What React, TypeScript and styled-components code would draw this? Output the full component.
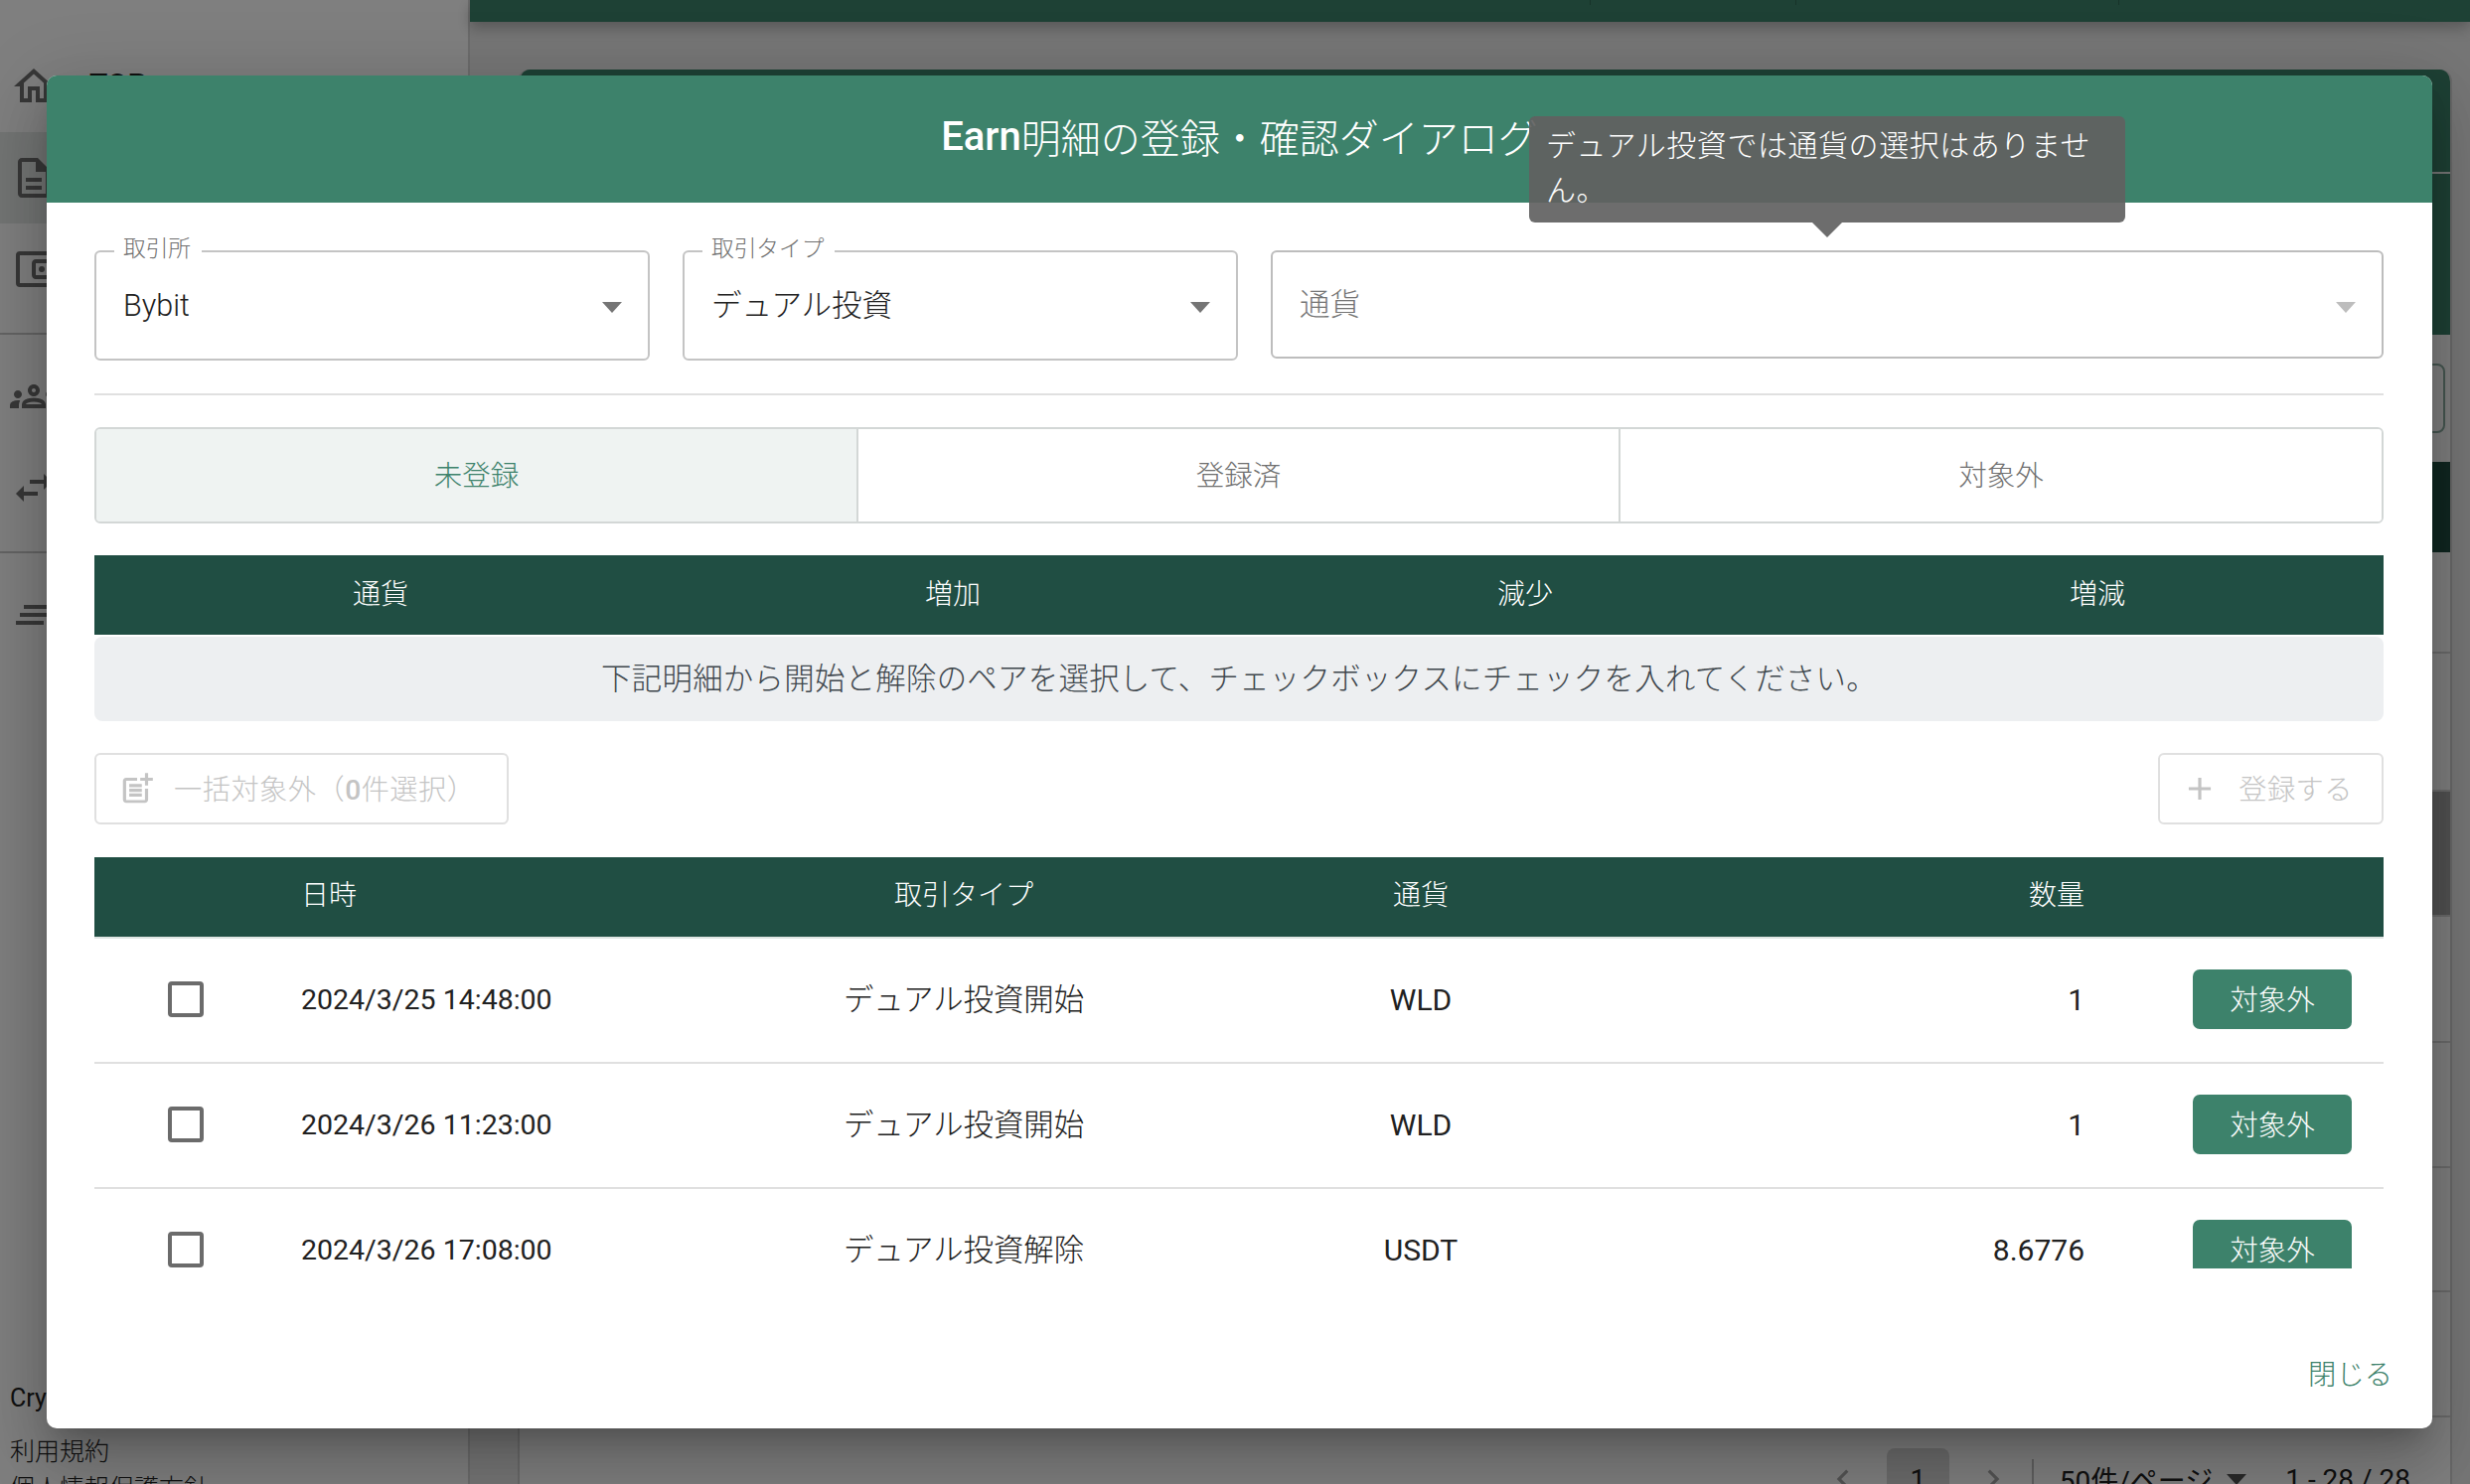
import React from "react"
import styled, { createGlobalStyle } from "styled-components"
import {
  MdAdd,
  MdChevronLeft,
  MdChevronRight,
  MdClearAll,
  MdOutlineAccountBalanceWallet,
  MdOutlineDescription,
  MdOutlineGroups,
  MdOutlineHome,
  MdOutlinePostAdd,
  MdSwapHoriz,
} from "react-icons/md"

const green = "#3d826b"
const darkGreen = "#204e43"

const GlobalStyle = createGlobalStyle`
  html, body {
    margin: 0;
    padding: 0;
    overflow: hidden;
    background: #ececec;
  }
  * {
    box-sizing: border-box;
  }
  body {
    font-family: Roboto, "Noto Sans CJK JP", sans-serif;
    color: #212121;
  }
`

const rows = [
  { date: "2024/3/25 14:48:00", type: "デュアル投資開始", currency: "WLD", amount: "1" },
  { date: "2024/3/26 11:23:00", type: "デュアル投資開始", currency: "WLD", amount: "1" },
  { date: "2024/3/26 17:08:00", type: "デュアル投資解除", currency: "USDT", amount: "8.6776" },
]

const App = () => {
  return (
    <Page>
      <GlobalStyle />
      <Sidebar>
        <SideItem>
          <MdOutlineHome size={48} />
          <SideLabel>TOP</SideLabel>
        </SideItem>
        <SideItem $active>
          <MdOutlineDescription size={48} />
        </SideItem>
        <SideItem>
          <MdOutlineAccountBalanceWallet size={48} />
        </SideItem>
        <SideDivider />
        <SideItem>
          <MdOutlineGroups size={48} />
        </SideItem>
        <SideItem>
          <MdSwapHoriz size={48} />
        </SideItem>
        <SideDivider />
        <SideItem>
          <MdClearAll size={48} />
        </SideItem>
        <SideFooter>
          <Brand>Cry</Brand>
          <LegalLink>利用規約</LegalLink>
          <LegalLink>個人情報保護方針</LegalLink>
        </SideFooter>
      </Sidebar>

      <Main>
        <TopBar>
          <TopMark $width={1128} />
          <TopMark $width={207} />
          <TopMark $width={325} />
        </TopBar>
        <Card>
          <CardHeadTop />
          <CardHeadBottom />
          <CardSearch>
            <SearchBox />
          </CardSearch>
          <CardTableHead />
          <CardRow $height={102} />
          <CardRow $height={139} />
          <CardRow $height={126} $selected />
          <CardRow $height={127} />
          <CardRow $height={126} />
          <CardRow $height={125} />
          <CardRow $height={126} />
          <CardPager>
            <PagerArrow>
              <MdChevronLeft size={38} />
            </PagerArrow>
            <PagerCurrent>1</PagerCurrent>
            <PagerArrow>
              <MdChevronRight size={38} />
            </PagerArrow>
            <PagerSize>
              50件/ページ
              <PagerCaret />
            </PagerSize>
            <span>1 - 28 / 28</span>
          </CardPager>
        </Card>
      </Main>

      <Backdrop />

      <Dialog>
        <DialogTitle>
          <TitleLatin>Earn</TitleLatin>明細の登録・確認ダイアログ
        </DialogTitle>

        <Tooltip>デュアル投資では通貨の選択はありません。</Tooltip>

        <DialogBody>
          <Filters>
            <SelectBox>
              <SelectLabel>取引所</SelectLabel>
              Bybit
              <Caret />
            </SelectBox>
            <SelectBox>
              <SelectLabel>取引タイプ</SelectLabel>
              <CjkValue>デュアル投資</CjkValue>
              <Caret />
            </SelectBox>
            <SelectBox $disabled>
              <CjkValue>通貨</CjkValue>
              <Caret $disabled />
            </SelectBox>
          </Filters>

          <Divider />

          <Tabs>
            <Tab $active>未登録</Tab>
            <Tab>登録済</Tab>
            <Tab>対象外</Tab>
          </Tabs>

          <SummaryHead>
            <span>通貨</span>
            <span>増加</span>
            <span>減少</span>
            <span>増減</span>
          </SummaryHead>
          <Notice>下記明細から開始と解除のペアを選択して、チェックボックスにチェックを入れてください。</Notice>

          <Actions>
            <GhostButton $paddingLeft={22} $paddingRight={32} $gap={18}>
              <MdOutlinePostAdd size={38} />
              <GhostText>
                一括対象外（<b>0</b>件選択）
              </GhostText>
            </GhostButton>
            <GhostButton $paddingLeft={21} $paddingRight={29} $gap={20}>
              <MdAdd size={38} />
              <GhostText>登録する</GhostText>
            </GhostButton>
          </Actions>

          <TableClip>
            <DetailRow $head>
              <span />
              <span>日時</span>
              <Centered>取引タイプ</Centered>
              <Centered>通貨</Centered>
              <RightAligned>数量</RightAligned>
              <span />
            </DetailRow>
            {rows.map(row => (
              <DetailRow key={row.date + row.amount}>
                <CheckCell>
                  <CheckBox />
                </CheckCell>
                <DateCell>{row.date}</DateCell>
                <CjkCell>{row.type}</CjkCell>
                <Centered>{row.currency}</Centered>
                <RightAligned>{row.amount}</RightAligned>
                <ActionCell>
                  <ExcludeButton>対象外</ExcludeButton>
                </ActionCell>
              </DetailRow>
            ))}
          </TableClip>
        </DialogBody>

        <DialogFooter>
          <CloseButton>閉じる</CloseButton>
        </DialogFooter>
      </Dialog>
    </Page>
  )
}

export default App

const Page = styled.div`
  display: flex;
  width: 2486px;
  height: 1494px;
  overflow: hidden;
  position: relative;
`

const Sidebar = styled.aside`
  width: 473px;
  height: 1494px;
  flex: none;
  display: flex;
  flex-direction: column;
  padding-top: 41px;
  background: #fff;
  border-right: 2px solid #d8d8d8;
`

const SideItem = styled.div<{ $active?: boolean }>`
  height: 92px;
  flex: none;
  display: flex;
  align-items: center;
  gap: 32px;
  padding-left: 10px;
  color: #707070;
  background: ${props => (props.$active ? "#e6ebe8" : "transparent")};
`

const SideLabel = styled.span`
  margin-bottom: 6px;
  font-size: 30px;
  font-weight: 500;
  color: #212121;
`

const SideDivider = styled.div`
  height: 2px;
  margin: 18px 0 16px;
  background: #c8c8c8;
`

const SideFooter = styled.div`
  margin-top: auto;
  height: 111px;
  flex: none;
  overflow: hidden;
  padding-left: 10px;
`

const Brand = styled.div`
  font-size: 25px;
  line-height: 50px;
  margin-bottom: 10px;
`

const LegalLink = styled.div`
  font-size: 25px;
  font-weight: 300;
  line-height: 37px;
`

const Main = styled.main`
  flex: 1;
  min-width: 0;
  display: flex;
  flex-direction: column;
`

const TopBar = styled.div`
  height: 22px;
  flex: none;
  display: flex;
  background: ${green};
  box-shadow: 0 6px 14px rgba(0, 0, 0, 0.25);
`

const TopMark = styled.div<{ $width: number }>`
  width: ${props => props.$width}px;
  height: 5px;
  border-right: 1px solid #2f6553;
`

const Card = styled.section`
  margin: 48px 18px 0 48px;
  height: 1500px;
  flex: none;
  border: 2px solid #d2d2d2;
  border-top: none;
  border-radius: 12px 12px 0 0;
  background: #fff;
  overflow: hidden;
`

const CardHeadTop = styled.div`
  height: 105px;
  background: ${green};
  border-bottom: 2px solid #eee;
`

const CardHeadBottom = styled.div`
  height: 162px;
  background: ${green};
`

const CardSearch = styled.div`
  height: 128px;
  display: flex;
  justify-content: flex-end;
  align-items: center;
  padding: 0 5px 0 0;
`

const SearchBox = styled.div`
  width: 300px;
  height: 70px;
  border: 2px solid #8fb0a5;
  border-radius: 8px;
`

const CardTableHead = styled.div`
  height: 91px;
  background: ${darkGreen};
`

const CardRow = styled.div<{ $height: number; $selected?: boolean }>`
  height: ${props => props.$height}px;
  background: ${props => (props.$selected ? "#a5a5a5" : "#fff")};
  border-bottom: 2px solid #d6d6d6;
`

const CardPager = styled.div`
  display: flex;
  align-items: center;
  height: 93px;
  padding: 31px 40px 0 0;
  justify-content: flex-end;
  font-size: 28px;
`

const PagerArrow = styled.span`
  display: flex;
  color: #a8a8a8;
  margin: 0 25px;
`

const PagerCurrent = styled.span`
  width: 63px;
  height: 62px;
  display: flex;
  justify-content: center;
  align-items: center;
  border-radius: 8px;
  background: #d9d9d9;
`

const PagerSize = styled.span`
  display: flex;
  align-items: center;
  gap: 14px;
  height: 40px;
  margin: 0 39px 0 -5px;
  padding-left: 26px;
  border-left: 2px solid #c0c0c0;
`

const PagerCaret = styled.i`
  border-left: 10px solid transparent;
  border-right: 10px solid transparent;
  border-top: 11px solid #555;
`

const Backdrop = styled.div`
  position: absolute;
  inset: 0;
  background: rgba(0, 0, 0, 0.5);
`

const Dialog = styled.div`
  position: absolute;
  left: 47px;
  top: 76px;
  width: 2401px;
  height: 1362px;
  display: flex;
  flex-direction: column;
  background: #fff;
  border-radius: 10px;
  box-shadow: 0 17px 24px -11px rgba(0, 0, 0, 0.2), 0 38px 60px 5px rgba(0, 0, 0, 0.14),
    0 14px 73px 13px rgba(0, 0, 0, 0.12);
`

const DialogTitle = styled.h2`
  margin: 0;
  height: 128px;
  flex: none;
  display: flex;
  align-items: center;
  justify-content: center;
  padding-bottom: 6px;
  background: ${green};
  border-radius: 10px 10px 0 0;
  color: #fff;
  font-size: 40px;
  font-weight: 300;
`

const TitleLatin = styled.span`
  font-weight: 500;
`

const Tooltip = styled.div`
  position: absolute;
  left: 1492px;
  top: 41px;
  width: 600px;
  height: 107px;
  padding: 7px 17px;
  border-radius: 6px;
  background: rgba(97, 97, 97, 0.92);
  color: #fff;
  font-size: 30px;
  font-weight: 300;
  line-height: 45px;
  letter-spacing: 0.55px;

  &::after {
    content: "";
    position: absolute;
    left: 285px;
    top: 107px;
    border-left: 15px solid transparent;
    border-right: 15px solid transparent;
    border-top: 15px solid rgba(97, 97, 97, 0.92);
  }
`

const DialogBody = styled.div`
  flex: 1;
  min-height: 0;
  padding: 48px 49px 0 48px;
`

const Filters = styled.div`
  display: grid;
  grid-template-columns: 559px 559px 1120px;
  column-gap: 33px;
`

const SelectBox = styled.div<{ $disabled?: boolean }>`
  position: relative;
  height: ${props => (props.$disabled ? 109 : 111)}px;
  display: flex;
  align-items: center;
  padding-left: 27px;
  border: 2px solid ${props => (props.$disabled ? "#bdbdbd" : "#c4c4c4")};
  border-radius: 6px;
  font-size: 30.5px;
  font-weight: 300;
  color: ${props => (props.$disabled ? "#757575" : "#212121")};
`

const CjkValue = styled.span`
  padding-bottom: 6px;
`

const SelectLabel = styled.label`
  position: absolute;
  left: 18px;
  top: -17px;
  padding: 0 11px 0 9px;
  background: linear-gradient(transparent 12px, #fff 12px);
  color: #6f6f6f;
  font-size: 22.7px;
  font-weight: 300;
  line-height: 28px;
`

const Caret = styled.i<{ $disabled?: boolean }>`
  position: absolute;
  right: 26px;
  top: 50px;
  border-left: 10.5px solid transparent;
  border-right: 10.5px solid transparent;
  border-top: 11px solid ${props => (props.$disabled ? "#bdbdbd" : "#757575")};
`

const Divider = styled.hr`
  height: 2px;
  margin: 33px 0 32px;
  border: none;
  background: #e0e0e0;
`

const Tabs = styled.div`
  display: grid;
  grid-template-columns: 765px 767px 1fr;
  height: 97px;
  border: 2px solid #d3d7d6;
  border-radius: 6px;
  overflow: hidden;
`

const Tab = styled.div<{ $active?: boolean }>`
  display: flex;
  align-items: center;
  justify-content: center;
  padding-bottom: 5px;
  font-size: 28.5px;
  font-weight: 300;
  color: ${props => (props.$active ? green : "#6f6f6f")};
  background: ${props => (props.$active ? "#eff3f2" : "#fff")};
  border-left: ${props => (props.$active ? "none" : "2px solid #d3d7d6")};
`

const SummaryHead = styled.div`
  display: grid;
  grid-template-columns: repeat(4, 1fr);
  height: 80px;
  margin-top: 32px;
  align-items: center;
  justify-items: center;
  padding-bottom: 6px;
  background: ${darkGreen};
  color: #fff;
  font-size: 28px;
  font-weight: 300;
`

const Notice = styled.div`
  height: 85px;
  margin-top: 2px;
  display: flex;
  align-items: center;
  justify-content: center;
  padding-bottom: 5px;
  border-radius: 8px;
  background: #edeff1;
  color: #3f474d;
  font-size: 30.4px;
  font-weight: 300;
  letter-spacing: 0.3px;
`

const Actions = styled.div`
  display: flex;
  justify-content: space-between;
  margin: 32px 0 33px;
`

const GhostButton = styled.div<{ $paddingLeft: number; $paddingRight: number; $gap: number }>`
  height: 72px;
  display: flex;
  align-items: center;
  gap: ${props => props.$gap}px;
  padding: 0 ${props => props.$paddingRight}px 0 ${props => props.$paddingLeft}px;
  border: 2px solid #e0e0e0;
  border-radius: 6px;
  color: #c4c4c4;

  svg {
    flex: none;
  }
`

const GhostText = styled.span`
  padding-bottom: 4px;
  font-size: 28.2px;
  font-weight: 300;
  letter-spacing: 0.5px;

  b {
    font-weight: 500;
  }
`

const TableClip = styled.div`
  height: 414px;
  overflow: hidden;
`

const DetailRow = styled.div<{ $head?: boolean }>`
  display: grid;
  grid-template-columns: 208px 430px 474px 446px 445px 301px;
  align-items: center;
  height: ${props => (props.$head ? 82 : 126)}px;
  padding-bottom: ${props => (props.$head ? 9 : 2)}px;
  border-bottom: 2px solid ${props => (props.$head ? "#dfe5e3" : "#e0e0e0")};
  background: ${props => (props.$head ? darkGreen : "#fff")};
  color: ${props => (props.$head ? "#fff" : "#212121")};
  font-size: ${props => (props.$head ? 28 : 30)}px;
  font-weight: ${props => (props.$head ? 300 : 400)};
`

const DateCell = styled.span`
  font-size: 28.5px;
`

const Centered = styled.span`
  text-align: center;
`

const CjkCell = styled(Centered)`
  padding-bottom: 4px;
  font-size: 30.4px;
  font-weight: 300;
`

const RightAligned = styled.span`
  text-align: right;
`

const CheckCell = styled.span`
  display: flex;
  padding-left: 74px;
`

const CheckBox = styled.span`
  width: 36px;
  height: 36px;
  border: 4px solid #6b6b6b;
  border-radius: 4px;
`

const ActionCell = styled.span`
  display: flex;
  justify-content: flex-end;
  padding-right: 32px;
`

const ExcludeButton = styled.span`
  width: 160px;
  height: 60px;
  display: flex;
  align-items: center;
  justify-content: center;
  padding-bottom: 3px;
  border-radius: 7px;
  background: ${green};
  color: #fff;
  font-size: 28.5px;
  font-weight: 300;
`

const DialogFooter = styled.div`
  height: 108px;
  flex: none;
  display: flex;
  justify-content: flex-end;
  align-items: center;
  padding: 0 40px 0 0;
`

const CloseButton = styled.span`
  padding-bottom: 5px;
  color: ${green};
  font-size: 28.3px;
  font-weight: 300;
`
